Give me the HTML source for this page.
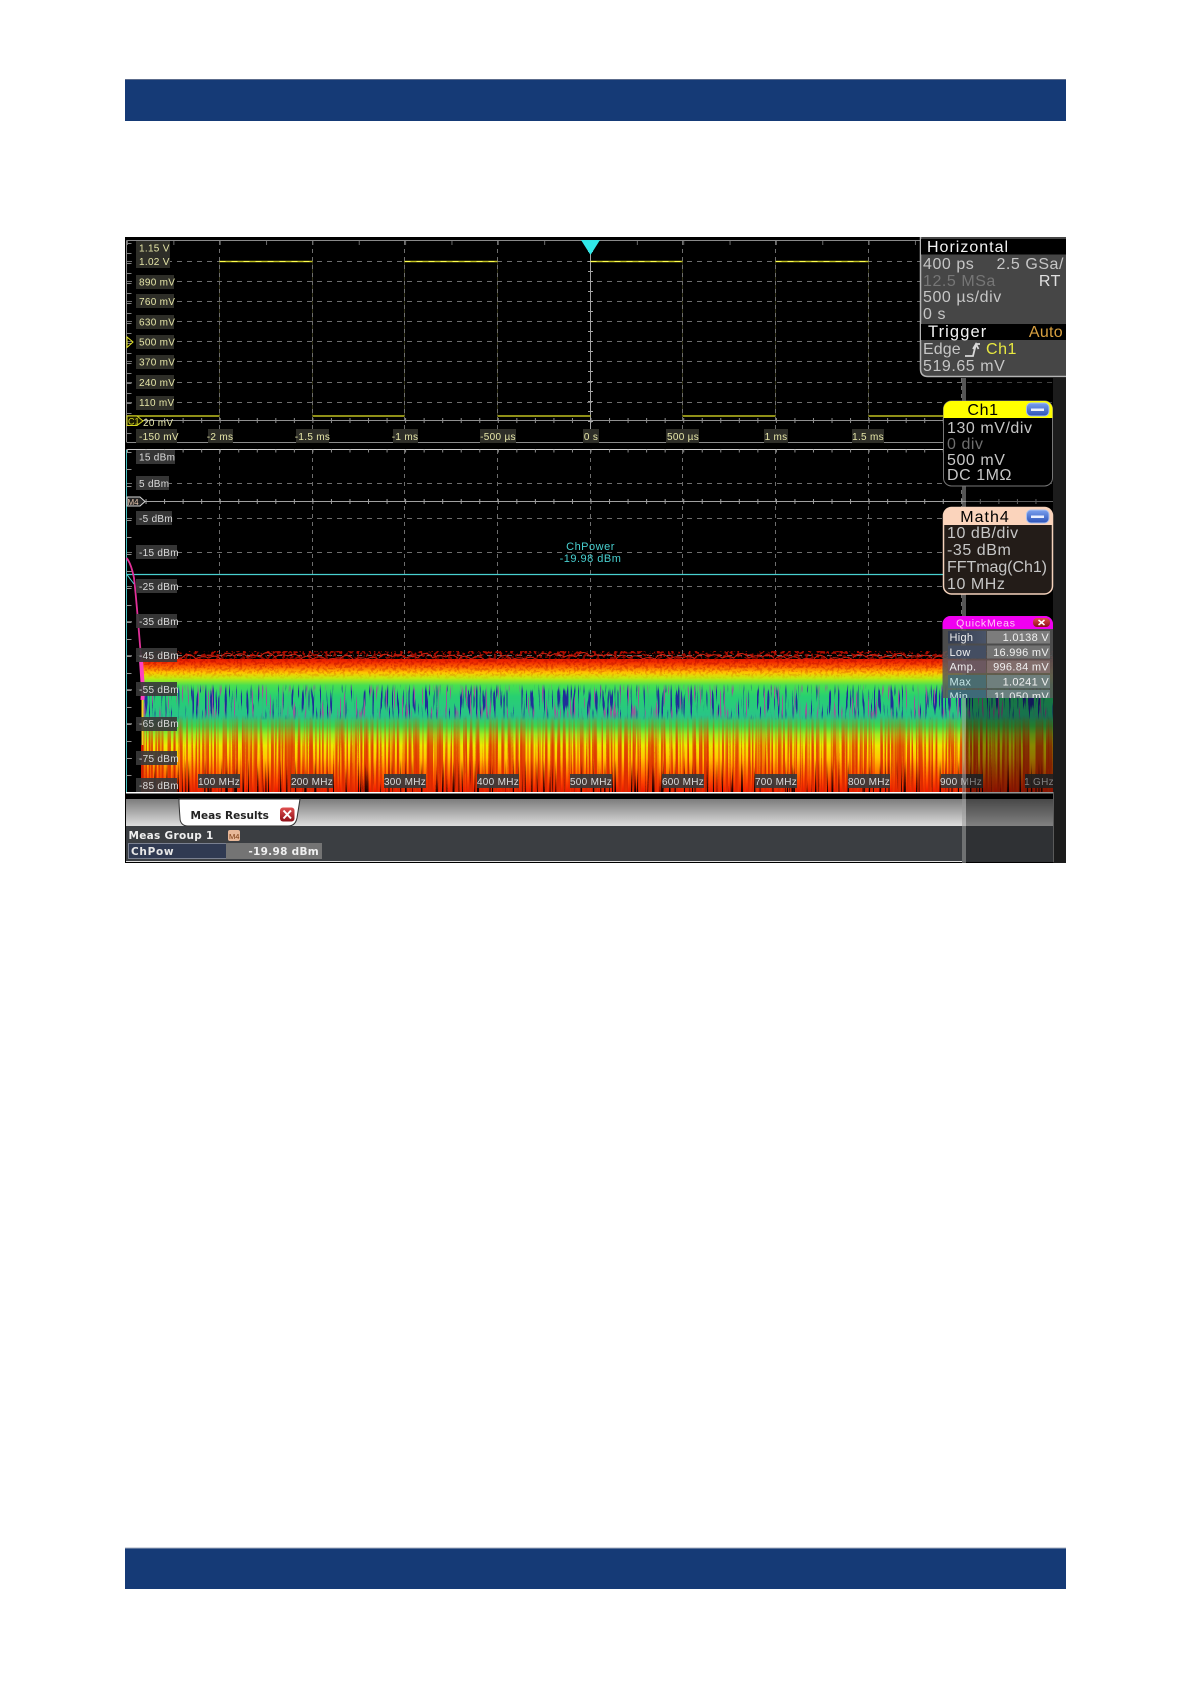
<!DOCTYPE html>
<html><head><meta charset="utf-8"><title>Scope</title>
<style>
html,body{margin:0;padding:0;background:#fff;width:1191px;height:1684px;overflow:hidden}
svg{position:absolute;left:0;top:0;display:block}
text{font-family:"Liberation Sans",sans-serif}
.y{fill:#e6e6a8;font-size:10px;letter-spacing:.3px}
.w{fill:#dcdcdc;font-size:10px;letter-spacing:.3px}
.p{fill:#c6c6c6;font-size:16px;letter-spacing:.55px}
.d{font-family:"DejaVu Sans",sans-serif;font-weight:bold}
.b{fill:#2e2e28}
.g{fill:#3a3a3a;fill-opacity:.92}
</style></head><body>
<svg width="1191" height="1684" viewBox="0 0 1191 1684">
<defs>
<linearGradient id="sp" x1="0" y1="655" x2="0" y2="792" gradientUnits="userSpaceOnUse">
<stop offset="0" stop-color="#d81000"/><stop offset=".05" stop-color="#f02800"/><stop offset=".09" stop-color="#ff6a00"/><stop offset=".13" stop-color="#ffc800"/><stop offset=".17" stop-color="#c0ec10"/><stop offset=".22" stop-color="#48e050"/><stop offset=".3" stop-color="#28d070"/><stop offset=".45" stop-color="#28c488"/><stop offset=".52" stop-color="#40d848"/><stop offset=".58" stop-color="#a0ec20"/><stop offset=".66" stop-color="#ecec00"/><stop offset=".75" stop-color="#ffc800"/><stop offset=".84" stop-color="#ff8400"/><stop offset=".92" stop-color="#ff4800"/><stop offset="1" stop-color="#f01800"/>
</linearGradient>
<linearGradient id="mg1" x1="0" y1="715" x2="0" y2="792" gradientUnits="userSpaceOnUse"><stop offset="0" stop-color="#000"/><stop offset=".4" stop-color="#bbb"/><stop offset="1" stop-color="#fff"/></linearGradient>
<linearGradient id="mg2" x1="0" y1="684" x2="0" y2="720" gradientUnits="userSpaceOnUse"><stop offset="0" stop-color="#000"/><stop offset=".2" stop-color="#fff"/><stop offset=".8" stop-color="#fff"/><stop offset="1" stop-color="#000"/></linearGradient>
<linearGradient id="mg3" x1="0" y1="650" x2="0" y2="680" gradientUnits="userSpaceOnUse"><stop offset="0" stop-color="#fff"/><stop offset=".4" stop-color="#888"/><stop offset="1" stop-color="#000"/></linearGradient>
<linearGradient id="mg4" x1="0" y1="760" x2="0" y2="792" gradientUnits="userSpaceOnUse"><stop offset="0" stop-color="#000"/><stop offset="1" stop-color="#fff"/></linearGradient>
<mask id="m1"><rect x="142" y="650" width="912" height="145" fill="url(#mg1)"/></mask>
<mask id="m2"><rect x="142" y="650" width="912" height="145" fill="url(#mg2)"/></mask>
<mask id="m3"><rect x="142" y="650" width="912" height="145" fill="url(#mg3)"/></mask>
<mask id="m4"><rect x="142" y="650" width="912" height="145" fill="url(#mg4)"/></mask>
<pattern id="st" x="142" y="0" width="31" height="10" patternUnits="userSpaceOnUse"><path d="M2 0V10M7.500 0V10M14 0V10M19 0V10M26 0V10" stroke="#e83800" stroke-width="1.400"/></pattern>
<filter id="f1" x="0" y="0" width="100%" height="100%" color-interpolation-filters="sRGB"><feTurbulence type="fractalNoise" baseFrequency="0.42 0.005" numOctaves="1" seed="4"/><feColorMatrix values="0 0 0 0 .86  0 0 0 0 .16  0 0 0 0 0  16 0 0 0 -7.800"/></filter>
<filter id="f2" x="0" y="0" width="100%" height="100%" color-interpolation-filters="sRGB"><feTurbulence type="fractalNoise" baseFrequency="0.55 0.035" numOctaves="1" seed="9"/><feColorMatrix values="0 0 0 0 .12  0 0 0 0 .18  0 0 0 0 .6  16 0 0 0 -9"/></filter>
<filter id="f3" x="0" y="0" width="100%" height="100%" color-interpolation-filters="sRGB"><feTurbulence type="fractalNoise" baseFrequency="0.35 0.35" numOctaves="2" seed="2"/><feColorMatrix values="0 0 0 0 .75  0 0 0 0 .05  0 0 0 0 0  10 0 0 0 -5"/></filter>
<filter id="f4" x="0" y="0" width="100%" height="100%" color-interpolation-filters="sRGB"><feTurbulence type="fractalNoise" baseFrequency="0.6 0.012" numOctaves="1" seed="17"/><feColorMatrix values="0 0 0 0 .08  0 0 0 0 0  0 0 0 0 0  16 0 0 0 -9.600"/></filter>
<filter id="f5" x="0" y="0" width="100%" height="100%" color-interpolation-filters="sRGB"><feTurbulence type="fractalNoise" baseFrequency="0.5 0.03" numOctaves="1" seed="23"/><feColorMatrix values="0 0 0 0 .6  0 0 0 0 .35  0 0 0 0 .6  16 0 0 0 -10"/></filter>
<linearGradient id="tab" x1="0" y1="0" x2="0" y2="1"><stop offset="0" stop-color="#7c7c7c"/><stop offset="1" stop-color="#dedede"/></linearGradient>
<linearGradient id="btn" x1="0" y1="0" x2="0" y2="1"><stop offset="0" stop-color="#7aa0ee"/><stop offset="1" stop-color="#2c52b8"/></linearGradient>
<linearGradient id="rbtn" x1="0" y1="0" x2="0" y2="1"><stop offset="0" stop-color="#e05050"/><stop offset="1" stop-color="#901018"/></linearGradient>
<linearGradient id="lab" x1="0" y1="0" x2="1" y2="0"><stop offset="0" stop-color="#333c50"/><stop offset="1" stop-color="#4a5468"/></linearGradient>
<path id="bp" d="M0 0q6-7 13-1q7-5 14 1q6-3 12 0q7-9 15 0q6-4 13-1q6-4 12 1" fill="none" stroke="#d02010" stroke-width="1"/>
<clipPath id="qc"><rect x="942" y="616" width="111" height="82"/></clipPath>
</defs>

<!-- header / footer bars -->
<rect x="125" y="79" width="941" height="42" fill="#153a76"/>
<rect x="125" y="79" width="941" height="1" fill="#5c6c8c"/>
<rect x="125" y="1547.500" width="941" height="41.500" fill="#153a76"/>
<rect x="125" y="1547.500" width="941" height="1" fill="#a8b0c0"/>

<!-- scope frame -->
<rect x="125" y="237" width="941" height="626" fill="#000"/>

<!-- upper diagram grid -->
<path d="M219.500 261V416M312.500 261V416M404.500 261V416M497.500 261V416M682.500 261V416M775.500 261V416M868.500 261V416" fill="none" stroke="#33331a"/>
<g fill="none" stroke="#8a8a8a" stroke-width="1">
<path d="M126.500 240.500H1053M126.500 240.500V442M126.500 442.500H1053"/>
<path d="M127 261.500H1053M127 281.500H1053M127 301.500H1053M127 321.500H1053M127 341.500H1053M127 361.500H1053M127 382.500H1053M127 402.500H1053" stroke-dasharray="5 5" stroke="#6e6e6e"/>
<path d="M219.500 241V442M312.500 241V442M404.500 241V442M497.500 241V442M682.500 241V442M775.500 241V442M868.500 241V442M961.500 378V442" stroke-dasharray="4 4" stroke="#6e6e6e"/>
<path d="M127 420.500H1053" stroke="#8f8f8f"/>
<path d="M127 420.500H1053" stroke="#8f8f8f" stroke-width="5" stroke-dasharray="1 17.540"/>
<path d="M127 243H920" stroke="#6a6a6a" stroke-width="4" stroke-dasharray="1 45.350"/>
<path d="M590.500 241V442" stroke="#a5a5a5"/>
<path d="M590.500 241V442" stroke="#a5a5a5" stroke-width="5" stroke-dasharray="1 9"/>
<path d="M129 243V442" stroke="#808080" stroke-width="5" stroke-dasharray="1 9"/>
</g>
<g fill="none" stroke="#c0c020" stroke-width="1.600">
<path d="M219.500 261.500H312.500M404.500 261.500H497.500M590.500 261.500H682.500M775.500 261.500H868.500"/>
<path d="M127 416H219.500M312.500 416H404.500M497.500 416H590.500M682.500 416H775.500M868.500 416H945"/>
</g>
<path d="M219.500 261.500H312.500M404.500 261.500H497.500M590.500 261.500H682.500M775.500 261.500H868.500" fill="none" stroke="#ffff50" stroke-width="1" stroke-dasharray="6 6"/>
<path d="M581 240H600L590.500 255Z" fill="#30e8e8"/>

<!-- upper labels -->
<g>
<rect class="b" x="136" y="241" width="34" height="14"/><rect class="b" x="136" y="254" width="34" height="14"/>
<rect class="b" x="136" y="275" width="38" height="14"/><rect class="b" x="136" y="294" width="38" height="14"/>
<rect class="b" x="136" y="315" width="38" height="14"/><rect class="b" x="136" y="335" width="38" height="14"/>
<rect class="b" x="136" y="355" width="38" height="14"/><rect class="b" x="136" y="375" width="38" height="14"/>
<rect class="b" x="136" y="396" width="38" height="14"/><rect class="b" x="136" y="429" width="41" height="14"/>
<rect class="b" x="208" y="429" width="25" height="14"/><rect class="b" x="296" y="429" width="33" height="14"/>
<rect class="b" x="393" y="429" width="25" height="14"/><rect class="b" x="480" y="429" width="36" height="14"/>
<rect class="b" x="583" y="429" width="16" height="14"/><rect class="b" x="666" y="429" width="33" height="14"/>
<rect class="b" x="764" y="429" width="24" height="14"/><rect class="b" x="852" y="429" width="32" height="14"/>
<text class="y" x="139" y="251.500">1.15 V</text><text class="y" x="139" y="265">1.02 V</text>
<text class="y" x="139" y="285.500">890 mV</text><text class="y" x="139" y="305">760 mV</text>
<text class="y" x="139" y="325.500">630 mV</text><text class="y" x="139" y="345.500">500 mV</text>
<text class="y" x="139" y="365.500">370 mV</text><text class="y" x="139" y="386">240 mV</text>
<text class="y" x="139" y="406">110 mV</text><text class="y" x="143" y="426">20 mV</text>
<text class="y" x="139" y="440">-150 mV</text>
<text class="y" x="220" y="440" text-anchor="middle">-2 ms</text><text class="y" x="312.500" y="440" text-anchor="middle">-1.5 ms</text>
<text class="y" x="405" y="440" text-anchor="middle">-1 ms</text><text class="y" x="498" y="440" text-anchor="middle">-500 µs</text>
<text class="y" x="591" y="440" text-anchor="middle">0 s</text><text class="y" x="683" y="440" text-anchor="middle">500 µs</text>
<text class="y" x="776" y="440" text-anchor="middle">1 ms</text><text class="y" x="868" y="440" text-anchor="middle">1.5 ms</text>
<path d="M127 337L127 347.500L133 342Z" fill="none" stroke="#e8e820"/>
<path d="M127 416H137L143 421L137 425.500H127Z" fill="#1a1a00" stroke="#d8d820"/>
<text x="128" y="424.500" fill="#d8d820" font-size="9">C1</text>
</g>

<!-- lower diagram grid -->
<g fill="none" stroke="#8a8a8a">
<path d="M126.500 449.500H1053" stroke="#d0d0d0"/>
<path d="M127 483.500H1053M127 518.500H1053M127 552.500H1053M127 586.500H1053M127 621.500H1053M127 655.500H1053M127 689.500H1053M127 723.500H1053M127 758.500H1053" stroke-dasharray="5 5" stroke="#6e6e6e"/>
<path d="M219.500 450V792M312.500 450V792M404.500 450V792M497.500 450V792M590.500 450V792M682.500 450V792M775.500 450V792M868.500 450V792M961.500 450V792" stroke-dasharray="4 4" stroke="#6e6e6e"/>
<path d="M127 501.500H1053" stroke="#a0a0a0"/>
<path d="M127 501.500H1053" stroke="#a0a0a0" stroke-width="5" stroke-dasharray="1 17.540"/>
<path d="M127 451H1053" stroke="#909090" stroke-width="3" stroke-dasharray="1 17.540"/>
<path d="M126.500 450V792" stroke="#48c0c0"/>
<path d="M129 452V792" stroke="#909090" stroke-width="5" stroke-dasharray="1 16"/>
<path d="M127 574.500H945" stroke="#48d0d0" stroke-width="1.200"/>
</g>

<!-- spectrum -->
<rect x="142" y="659" width="912" height="133" fill="url(#sp)"/>
<rect x="142" y="715" width="912" height="77" fill="url(#st)" mask="url(#m1)" opacity=".75"/>
<rect x="142" y="651" width="912" height="141" fill="#d82000" filter="url(#f1)" mask="url(#m1)"/>
<rect x="142" y="651" width="912" height="141" fill="#000" filter="url(#f4)" mask="url(#m4)"/>
<rect x="142" y="651" width="912" height="141" fill="#2040a0" filter="url(#f2)" mask="url(#m2)"/>
<rect x="142" y="651" width="912" height="141" fill="#80c0c0" filter="url(#f5)" mask="url(#m2)"/>
<rect x="142" y="651" width="912" height="141" fill="#8c0000" filter="url(#f3)" mask="url(#m3)"/>
<g>
<use href="#bp" x="142" y="659"/><use href="#bp" x="221" y="657"/><use href="#bp" x="300" y="660"/><use href="#bp" x="379" y="658"/><use href="#bp" x="458" y="660"/><use href="#bp" x="537" y="657"/><use href="#bp" x="616" y="659"/><use href="#bp" x="695" y="658"/><use href="#bp" x="774" y="660"/><use href="#bp" x="853" y="658"/><use href="#bp" x="932" y="660"/><use href="#bp" x="975" y="659"/>
</g>

<!-- pink trace -->
<path d="M126.500 558C130 562 132 568 134 578C136 595 138 620 140 645L142 668" fill="none" stroke="#e03098" stroke-width="1.800"/>
<path d="M141 660L143 690L142.500 700" fill="none" stroke="#ff40c0" stroke-width="4"/>
<path d="M142.500 700V745" fill="none" stroke="#f8d020" stroke-width="2"/>
<path d="M142 745V792" fill="none" stroke="#d02000" stroke-width="2"/>
<path d="M126.500 574L134 584" fill="none" stroke="#48d0d0"/>

<!-- lower labels -->
<g>
<rect class="g" x="136" y="450" width="39" height="14"/><rect class="g" x="136" y="476" width="33" height="14"/>
<rect class="g" x="136" y="511" width="36" height="14"/><rect class="g" x="136" y="545" width="41" height="14"/>
<rect class="g" x="136" y="579" width="41" height="14"/><rect class="g" x="136" y="614" width="41" height="14"/>
<rect class="g" x="136" y="648" width="41" height="14"/><rect class="g" x="136" y="682" width="41" height="14"/>
<rect class="g" x="136" y="717" width="41" height="14"/><rect class="g" x="136" y="751" width="41" height="14"/>
<rect class="g" x="136" y="778" width="41" height="14"/>
<rect class="g" x="198" y="774" width="42" height="14"/><rect class="g" x="291" y="774" width="42" height="14"/>
<rect class="g" x="384" y="774" width="42" height="14"/><rect class="g" x="477" y="774" width="42" height="14"/>
<rect class="g" x="570" y="774" width="42" height="14"/><rect class="g" x="662" y="774" width="42" height="14"/>
<rect class="g" x="755" y="774" width="42" height="14"/><rect class="g" x="848" y="774" width="42" height="14"/>
<rect class="g" x="941" y="774" width="42" height="14"/><rect class="g" x="1025" y="774" width="28" height="14"/>
<text class="w" x="139" y="460.500">15 dBm</text><text class="w" x="139" y="487">5 dBm</text>
<text class="w" x="139" y="522">-5 dBm</text><text class="w" x="139" y="556">-15 dBm</text>
<text class="w" x="139" y="590">-25 dBm</text><text class="w" x="139" y="625">-35 dBm</text>
<text class="w" x="139" y="659">-45 dBm</text><text class="w" x="139" y="693">-55 dBm</text>
<text class="w" x="139" y="727">-65 dBm</text><text class="w" x="139" y="762">-75 dBm</text>
<text class="w" x="139" y="789">-85 dBm</text>
<text class="w" x="219" y="785" text-anchor="middle">100 MHz</text><text class="w" x="312" y="785" text-anchor="middle">200 MHz</text>
<text class="w" x="405" y="785" text-anchor="middle">300 MHz</text><text class="w" x="498" y="785" text-anchor="middle">400 MHz</text>
<text class="w" x="591" y="785" text-anchor="middle">500 MHz</text><text class="w" x="683" y="785" text-anchor="middle">600 MHz</text>
<text class="w" x="776" y="785" text-anchor="middle">700 MHz</text><text class="w" x="869" y="785" text-anchor="middle">800 MHz</text>
<text class="w" x="961" y="785" text-anchor="middle">900 MHz</text><text class="w" x="1039" y="785" text-anchor="middle">1 GHz</text>
<path d="M127 497H140L145 501.500L140 506H127Z" fill="#222" stroke="#d8d8d8"/>
<text x="127.500" y="505" fill="#e8c8b0" font-size="8">M4</text>
<text x="590.500" y="550" text-anchor="middle" fill="#48d0d0" font-size="11" letter-spacing=".5">ChPower</text>
<text x="590.500" y="562" text-anchor="middle" fill="#48d0d0" font-size="11" letter-spacing=".5">-19.98 dBm</text>
</g>

<!-- bottom result area -->
<rect x="126" y="792" width="927" height="1.500" fill="#fff"/>
<rect x="126" y="799" width="927" height="27" fill="url(#tab)"/>
<rect x="126" y="826" width="927" height="36" fill="#3b3e42"/>
<rect x="126" y="861" width="836" height="1" fill="#e0e0e0"/>
<path d="M179 799C179 802 179 805 180 818C180 823 183 826 188 826H288C293 826 296 823 297 818L300 799Z" fill="#fff" stroke="#333"/>
<text class="d" x="190.500" y="819" font-size="10.500" fill="#222">Meas Results</text>
<rect x="280" y="807.500" width="14.500" height="14" rx="3" fill="url(#rbtn)"/>
<path d="M283.500 810.500L291 818.500M291 810.500L283.500 818.500" stroke="#fff" stroke-width="2"/>
<text class="d" x="128.500" y="839" font-size="10.500" letter-spacing=".3" fill="#f0f0f0">Meas Group 1</text>
<rect x="228" y="830" width="12" height="11" rx="2" fill="#e8b898"/><text x="229" y="839" font-size="7.500" fill="#7a3a10">M4</text>
<rect x="128.500" y="843.500" width="98" height="15" fill="#303a52" stroke="#7a8090"/>
<rect x="226" y="843" width="96" height="16" fill="#747474"/>
<text class="d" x="131" y="855" font-size="10.500" letter-spacing=".7" fill="#e8e8e8">ChPow</text>
<text class="d" x="319" y="855" font-size="10.500" letter-spacing=".3" fill="#f0f0f0" text-anchor="end">-19.98 dBm</text>

<!-- dim overlay and right column -->
<rect x="966" y="378" width="87" height="448" fill="#000" fill-opacity=".42"/>
<rect x="966" y="826" width="87" height="37" fill="#000" fill-opacity=".2"/>
<rect x="962" y="378" width="4" height="485" fill="#9a9a9a" fill-opacity=".55"/>
<rect x="1053" y="378" width="13" height="485" fill="#1c1c1c"/>
<rect x="1053" y="792" width="1" height="70" fill="#5a5a5a"/>

<!-- Horizontal panel -->
<path d="M920 237H1066V377H928Q920 377 920 369Z" fill="#464646"/>
<path d="M920.500 237V369Q920.500 376.500 928 376.500H1066" fill="none" stroke="#b4b4b4" stroke-width="1.500"/>
<rect x="921" y="239" width="145" height="15.500" fill="#000"/>
<rect x="921" y="324" width="145" height="16" fill="#000"/>
<text x="927" y="252" font-size="16" letter-spacing="1" fill="#f2f2f2">Horizontal</text>
<text class="p" x="923" y="269">400 ps</text><text class="p" x="1064" y="269" text-anchor="end">2.5 GSa/</text>
<text class="p" x="923" y="286" style="fill:#767676">12.5 MSa</text><text class="p" x="1061" y="286" text-anchor="end" style="fill:#e0e0e0">RT</text>
<text class="p" x="923" y="302">500 µs/div</text><text class="p" x="923" y="319">0 s</text>
<text x="928" y="337" font-size="16.500" letter-spacing="1.100" fill="#f2f2f2">Trigger</text>
<text x="1063" y="337" font-size="16" letter-spacing=".3" fill="#d8a040" text-anchor="end">Auto</text>
<text class="p" x="923" y="354" style="letter-spacing:.1px">Edge</text>
<path d="M965 356H973L976 344H980M973 349L976 344L978.500 349" fill="none" stroke="#d8d8d8" stroke-width="1.800"/>
<text class="p" x="986" y="354" style="fill:#e8e840">Ch1</text>
<text class="p" x="923" y="371">519.65 mV</text>

<!-- Ch1 box -->
<rect x="943.500" y="401" width="109" height="85" rx="8" fill="#000" stroke="#777"/>
<path d="M943.500 418V409A8 8 0 0 1 951.500 401H1044.500A8 8 0 0 1 1052.500 409V418Z" fill="#ffff00"/>
<text x="983" y="415" font-size="16" letter-spacing=".6" text-anchor="middle" fill="#000">Ch1</text>
<rect x="1026.500" y="403" width="22.500" height="13" rx="4.500" fill="url(#btn)" stroke="#a8c0f0"/>
<rect x="1031" y="408.500" width="13" height="2.500" fill="#eaf0ff"/>
<text class="p" x="947" y="433">130 mV/div</text><text class="p" x="947" y="449" style="fill:#6e6e6e">0 div</text>
<text class="p" x="947" y="465">500 mV</text><text class="p" x="947" y="480">DC 1MΩ</text>

<!-- Math4 box -->
<rect x="943.500" y="507.500" width="109" height="86.500" rx="8" fill="#231c18" stroke="#f4d2bc" stroke-width="1.500"/>
<path d="M943.500 525V515.500A8 8 0 0 1 951.500 507.500H1044.500A8 8 0 0 1 1052.500 515.500V525Z" fill="#fbd4bc"/>
<text x="985" y="522" font-size="16" letter-spacing="1" text-anchor="middle" fill="#000">Math4</text>
<rect x="1026.500" y="510" width="22.500" height="13" rx="4.500" fill="url(#btn)" stroke="#a8c0f0"/>
<rect x="1031" y="515.500" width="13" height="2.500" fill="#eaf0ff"/>
<text class="p" x="947" y="538">10 dB/div</text><text class="p" x="947" y="555">-35 dBm</text>
<text class="p" x="947" y="572" textLength="100" lengthAdjust="spacing" style="letter-spacing:0">FFTmag(Ch1)</text><text class="p" x="947" y="589">10 MHz</text>

<!-- QuickMeas -->
<path d="M942.500 628V624A8 8 0 0 1 950.500 616H1045A8 8 0 0 1 1053 624V698H942.500Z" fill="#595959" fill-opacity=".85"/>
<path d="M942.500 629V624A8 8 0 0 1 950.500 616H1045A8 8 0 0 1 1053 624V629Z" fill="#f000f0"/>
<text x="986" y="626.500" font-size="10.500" letter-spacing=".8" text-anchor="middle" fill="#ffc8f0">QuickMeas</text>
<rect x="1033" y="618" width="17" height="9" rx="4" fill="url(#rbtn)"/>
<path d="M1038.500 620L1044.500 625M1044.500 620L1038.500 625" stroke="#fff" stroke-width="1.500"/>
<g>
<rect x="948" y="631" width="38" height="12.500" fill="url(#lab)"/><rect x="987" y="631" width="63" height="12.500" fill="#7c7c7c"/>
<rect x="948" y="645.500" width="38" height="13" fill="#444e62"/><rect x="987" y="645.500" width="63" height="13" fill="#727272"/>
<rect x="948" y="660.500" width="38" height="12.500" fill="#6c5860"/><rect x="987" y="660.500" width="63" height="12.500" fill="#826e6c"/>
<rect x="948" y="675" width="38" height="13" fill="#4a6c70"/><rect x="987" y="675" width="63" height="13" fill="#6f7f7d"/>
<rect x="948" y="690" width="38" height="8" fill="#3e6a78"/><rect x="987" y="690" width="63" height="8" fill="#6a8080"/>
</g>
<g font-size="11" fill="#f0f0f0" letter-spacing=".3">
<text x="949.500" y="641">High</text><text x="1049" y="641" text-anchor="end">1.0138 V</text>
<text x="949.500" y="656">Low</text><text x="1049" y="656" text-anchor="end">16.996 mV</text>
<text x="949.500" y="670.500">Amp.</text><text x="1049" y="670.500" text-anchor="end">996.84 mV</text>
<text x="949.500" y="685.500" fill="#c8e8e8">Max</text><text x="1049" y="685.500" text-anchor="end">1.0241 V</text>
<g clip-path="url(#qc)"><text x="949.500" y="700" fill="#c8e8e8">Min</text><text x="1049" y="700" text-anchor="end">11.050 mV</text></g>
</g>
</svg>
</body></html>
